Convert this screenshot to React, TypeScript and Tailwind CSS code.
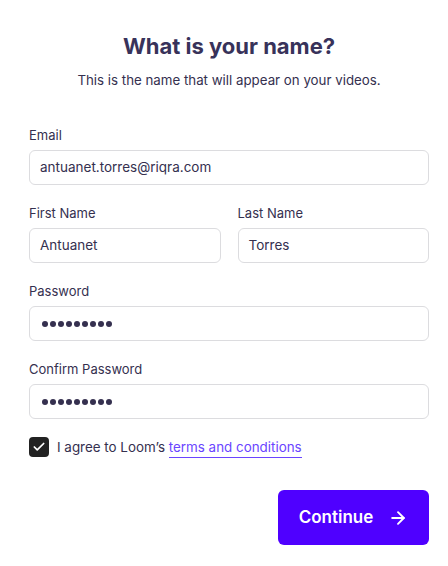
import { ArrowRight, Check } from 'lucide-react';

const font = { fontFamily: 'Inter, "Noto Sans", sans-serif' };

function Field({ label, value, className = '' }: { label: string; value: string; className?: string }) {
  return (
    <div className={`flex flex-col ${className}`}>
      <label className="text-[13px] leading-4 text-[#35304f] mb-[7px]">{label}</label>
      <div className="h-[35px] rounded-[6px] border border-[#dcdcdf] px-[10px] flex items-center text-[13.5px] text-[#35304f]">
        {value}
      </div>
    </div>
  );
}

function PasswordField({ label }: { label: string }) {
  return (
    <div className="flex flex-col mt-5">
      <label className="text-[13px] leading-4 text-[#35304f] mb-[7px]">{label}</label>
      <div className="h-[35px] rounded-[6px] border border-[#dcdcdf] pl-[12px] flex items-center gap-[2px]">
        {Array.from({ length: 9 }).map((_, i) => (
          <span key={i} className="w-[6px] h-[6px] rounded-full bg-[#35304f]" />
        ))}
      </div>
    </div>
  );
}

export default function App() {
  return (
    <div className="w-[448px] h-[566px] bg-white pl-[29px] pr-[19px]" style={font}>
      <h1 className="pt-[32px] text-center text-[22px] leading-7 font-bold text-[#38325a]">What is your name?</h1>
      <p className="mt-[12px] text-center text-[13.3px] leading-4 text-[#35304f]">
        This is the name that will appear on your videos.
      </p>

      <Field label="Email" value="antuanet.torres@riqra.com" className="mt-[39px]" />

      <div className="flex gap-[17px] mt-5">
        <Field label="First Name" value="Antuanet" className="flex-1" />
        <Field label="Last Name" value="Torres" className="flex-1" />
      </div>

      <PasswordField label="Password" />
      <PasswordField label="Confirm Password" />

      <div className="flex items-center mt-[18px]">
        <div className="w-5 h-5 rounded-[4px] bg-[#222222] flex items-center justify-center">
          <Check size={14} strokeWidth={3} color="white" />
        </div>
        <span className="ml-[8px] text-[13.4px] text-[#35304f]">
          I agree to Loom’s{' '}
          <span className="text-[#6a45ff] border-b border-[#6a45ff] pb-[2px]">terms and conditions</span>
        </span>
      </div>

      <div className="flex justify-end mt-[33px]">
        <button className="w-[151px] h-[55px] rounded-[6px] bg-[#4f00ff] text-white text-[17px] font-semibold flex items-center justify-center gap-[15px]">
          Continue
          <ArrowRight size={20} strokeWidth={2.25} />
        </button>
      </div>
    </div>
  );
}
